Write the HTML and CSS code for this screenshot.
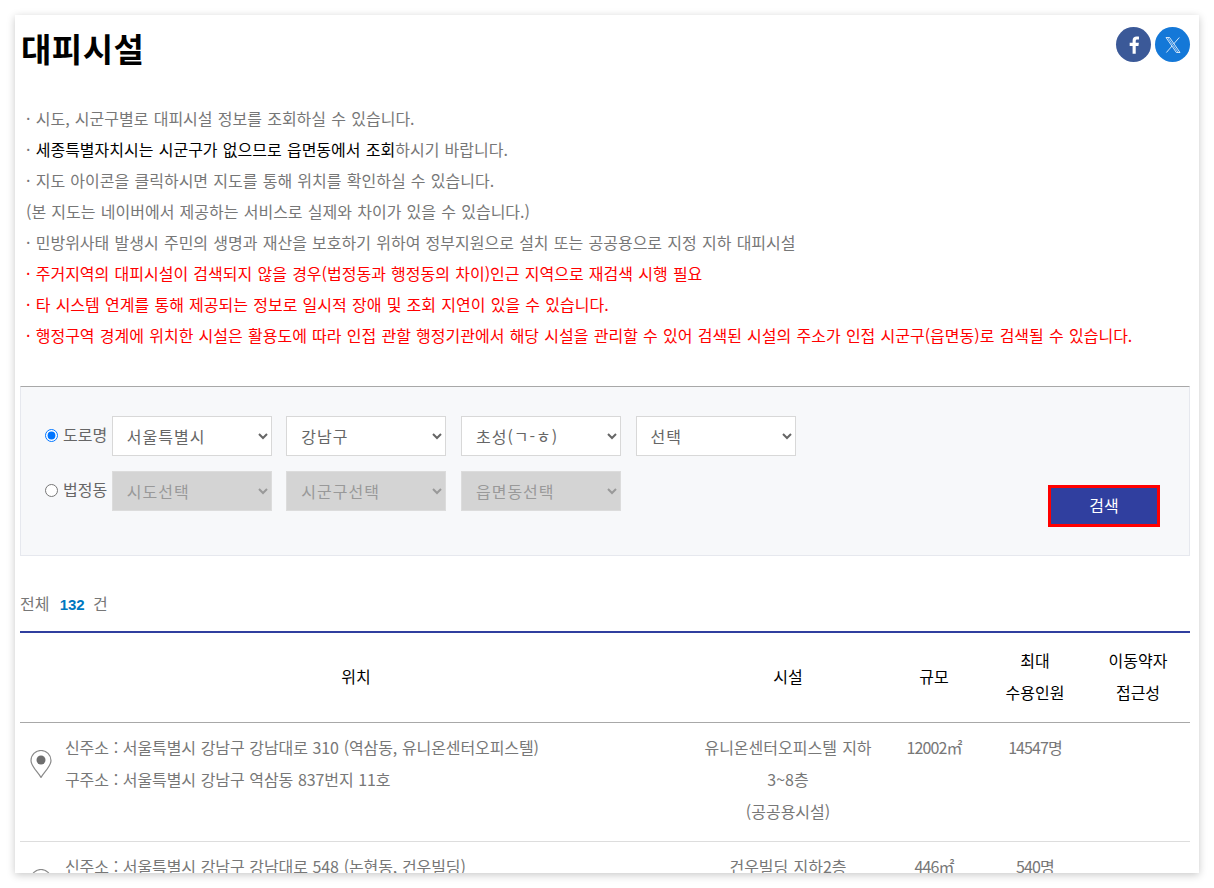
FILE: index.html
```html
<!DOCTYPE html>
<html lang="ko">
<head>
<meta charset="utf-8">
<title>대피시설</title>
<link rel="stylesheet" href="styles.css">
</head>
<body>
<div class="popup">
  <header class="head">
    <h1 class="title">대피시설</h1>
    <div class="share">
      <a class="sns fb" href="#" aria-label="facebook"><svg viewBox="0 0 24 24" width="26" height="26"><path fill="#fff" d="M13.6 20v-7.1h2.5l.4-2.9h-2.9V8.300c0-.8.3-1.400 1.500-1.400h1.500V4.300c-.3 0-1.200-.1-2.200-.1-2.200 0-3.700 1.300-3.700 3.800V10H8v2.900h2.700V20z"/></svg></a>
      <a class="sns tw" href="#" aria-label="X"><svg viewBox="0 0 24 24" width="24" height="24"><path fill="none" stroke="#fff" stroke-width=".8" d="M5 4.500h3.600l10.400 15h-3.600zM18.300 4.500l-5.700 6.500M11 13l-5.600 6.500"/><path fill="none" stroke="#fff" stroke-width=".6" d="M7 5l9.800 14"/></svg></a>
    </div>
  </header>
  <ul class="notes">
    <li>· 시도, 시군구별로 대피시설 정보를 조회하실 수 있습니다.</li>
    <li>· <span class="black">세종특별자치시는 시군구가 없으므로 읍면동에서 조회</span>하시기 바랍니다.</li>
    <li>· 지도 아이콘을 클릭하시면 지도를 통해 위치를 확인하실 수 있습니다.</li>
    <li>(본 지도는 네이버에서 제공하는 서비스로 실제와 차이가 있을 수 있습니다.)</li>
    <li>· 민방위사태 발생시 주민의 생명과 재산을 보호하기 위하여 정부지원으로 설치 또는 공공용으로 지정 지하 대피시설</li>
    <li class="red">· 주거지역의 대피시설이 검색되지 않을 경우(법정동과 행정동의 차이)인근 지역으로 재검색 시행 필요</li>
    <li class="red">· 타 시스템 연계를 통해 제공되는 정보로 일시적 장애 및 조회 지연이 있을 수 있습니다.</li>
    <li class="red">· 행정구역 경계에 위치한 시설은 활용도에 따라 인접 관할 행정기관에서 해당 시설을 관리할 수 있어 검색된 시설의 주소가 인접 시군구(읍면동)로 검색될 수 있습니다.</li>
  </ul>
  <form class="search">
    <div class="rows">
      <div class="row">
        <label class="radio"><input type="radio" name="t" checked>도로명</label>
        <select class="sel"><option>서울특별시</option></select>
        <select class="sel"><option>강남구</option></select>
        <select class="sel"><option>초성(ㄱ-ㅎ)</option></select>
        <select class="sel"><option>선택</option></select>
      </div>
      <div class="row">
        <label class="radio"><input type="radio" name="t">법정동</label>
        <select class="sel" disabled><option>시도선택</option></select>
        <select class="sel" disabled><option>시군구선택</option></select>
        <select class="sel" disabled><option>읍면동선택</option></select>
      </div>
    </div>
    <button class="btn" type="button">검색</button>
  </form>
  <p class="total">전체 <strong>132</strong> 건</p>
  <table class="list">
    <colgroup><col class="c1"><col class="c2"><col class="c3"><col class="c4"><col class="c5"></colgroup>
    <thead>
      <tr><th>위치</th><th>시설</th><th>규모</th><th>최대<br>수용인원</th><th>이동약자<br>접근성</th></tr>
    </thead>
    <tbody>
      <tr>
        <td class="addr">
          <svg class="pin" viewBox="0 0 22 28" width="22" height="28"><path fill="#fff" stroke="#8a8a8a" stroke-width="1.200" d="M11 27.500C8 22 1 16.500 1 10.500a10 10 0 0 1 20 0C21 16.500 14 22 11 27.500z"/><circle cx="11" cy="10" r="4.500" fill="#6e6e6e"/></svg>
          <div>신주소 : 서울특별시 강남구 강남대로 310 (역삼동, 유니온센터오피스텔)<br>구주소 : 서울특별시 강남구 역삼동 837번지 11호</div>
        </td>
        <td>유니온센터오피스텔 지하<br>3~8층<br>(공공용시설)</td>
        <td class="num">12002㎡</td>
        <td class="num">14547명</td>
        <td></td>
      </tr>
      <tr>
        <td class="addr">
          <svg class="pin" viewBox="0 0 22 28" width="22" height="28"><path fill="#fff" stroke="#8a8a8a" stroke-width="1.200" d="M11 27.500C8 22 1 16.500 1 10.500a10 10 0 0 1 20 0C21 16.500 14 22 11 27.500z"/><circle cx="11" cy="10" r="4.500" fill="#6e6e6e"/></svg>
          <div>신주소 : 서울특별시 강남구 강남대로 548 (논현동, 건우빌딩)</div>
        </td>
        <td>건우빌딩 지하2층</td>
        <td class="num">446㎡</td>
        <td class="num">540명</td>
        <td></td>
      </tr>
    </tbody>
  </table>
</div>
</body>
</html>
```
FILE: styles.css
```css
* { box-sizing: border-box; }
html, body { margin: 0; padding: 0; height: 100%; background: #fff; overflow: hidden; }
body {
  font-family: "Noto Sans CJK KR", "Noto Sans", sans-serif;
  font-size: 16px;
  color: #777;
  word-spacing: .75px;
}
.popup {
  margin: 15px 15px 0;
  width: 1184px;
  height: 858px;
  padding: 0 9px 0 5px;
  overflow: hidden;
  background: #fff;
  box-shadow: 0 2px 8px rgba(0, 0, 0, .22);
}
.head { display: flex; justify-content: space-between; align-items: flex-start; height: 88px; }
.title { margin: 10px 0 0 1px; font-size: 33px; line-height: 46px; font-weight: 700; color: #000; letter-spacing: .5px; }
.share { display: flex; gap: 4px; padding-top: 12px; }
.sns { width: 35px; height: 35px; border-radius: 50%; display: flex; align-items: center; justify-content: center; }
.fb { background: #3b5998; }
.tw { background: #1478d8; }
.notes { list-style: none; margin: 0; padding: 0 0 0 6px; height: 283px; }
.notes li { line-height: 31px; }
.black { color: #000; }
.red { color: #f00; }
.search {
  height: 170px;
  border: 1px solid #e6e8ee;
  border-top-color: #a8a8a8;
  background: #f7f8fa;
  padding: 29px 29px 0 24px;
  display: flex;
  justify-content: space-between;
}
.rows { display: flex; flex-direction: column; gap: 15px; }
.row { display: flex; gap: 14.6px; align-items: flex-start; }
.radio { display: flex; align-items: center; width: 66.75px; height: 36px; margin-right: -14.6px; color: #666; }
.radio input { width: 13px; height: 13px; margin: 2px 5px 0 0; }
.sel {
  width: 160px;
  height: 40px;
  padding: 0 10px;
  border: 1px solid #d8d8d8;
  border-radius: 0;
  background-color: #fff;
  color: #666;
  font: inherit;
  letter-spacing: 1px;
}
.sel:disabled { background-color: #d4d4d4; color: #999; opacity: 1; border-color: #dcdcdc; }
.btn {
  align-self: flex-start;
  margin-top: 69px;
  width: 112px;
  height: 42px;
  padding: 0 0 2px;
  border: 3px solid #f00;
  background: #303f9f;
  color: #fff;
  font: inherit;
}
.total { margin: 0; height: 75px; padding-top: 35px; line-height: 24px; }
.total strong { margin: 0 3px 0 5px; color: #0077c0; font-size: 15px; font-weight: 700; font-family: "Liberation Sans", sans-serif; }
.list { width: 1170px; border-collapse: collapse; table-layout: fixed; border-top: 2px solid #303f9f; }
.c1 { width: 672px; }
.c2 { width: 192px; }
.c3 { width: 100px; }
.c4 { width: 102px; }
.c5 { width: 104px; }
.list th { height: 90px; font-weight: 400; color: #000; line-height: 32px; border-bottom: 1px solid #a8a8a8; padding: 0 0 2px; }
.list td { padding: 8px 0 14px; text-align: center; vertical-align: top; line-height: 32px; border-bottom: 1px solid #ddd; }
.list td.num { letter-spacing: -0.9px; }
.addr { position: relative; padding-left: 45px !important; text-align: left !important; word-spacing: .4px; letter-spacing: -.1px; }
.pin { position: absolute; left: 10px; top: 27px; }
```
